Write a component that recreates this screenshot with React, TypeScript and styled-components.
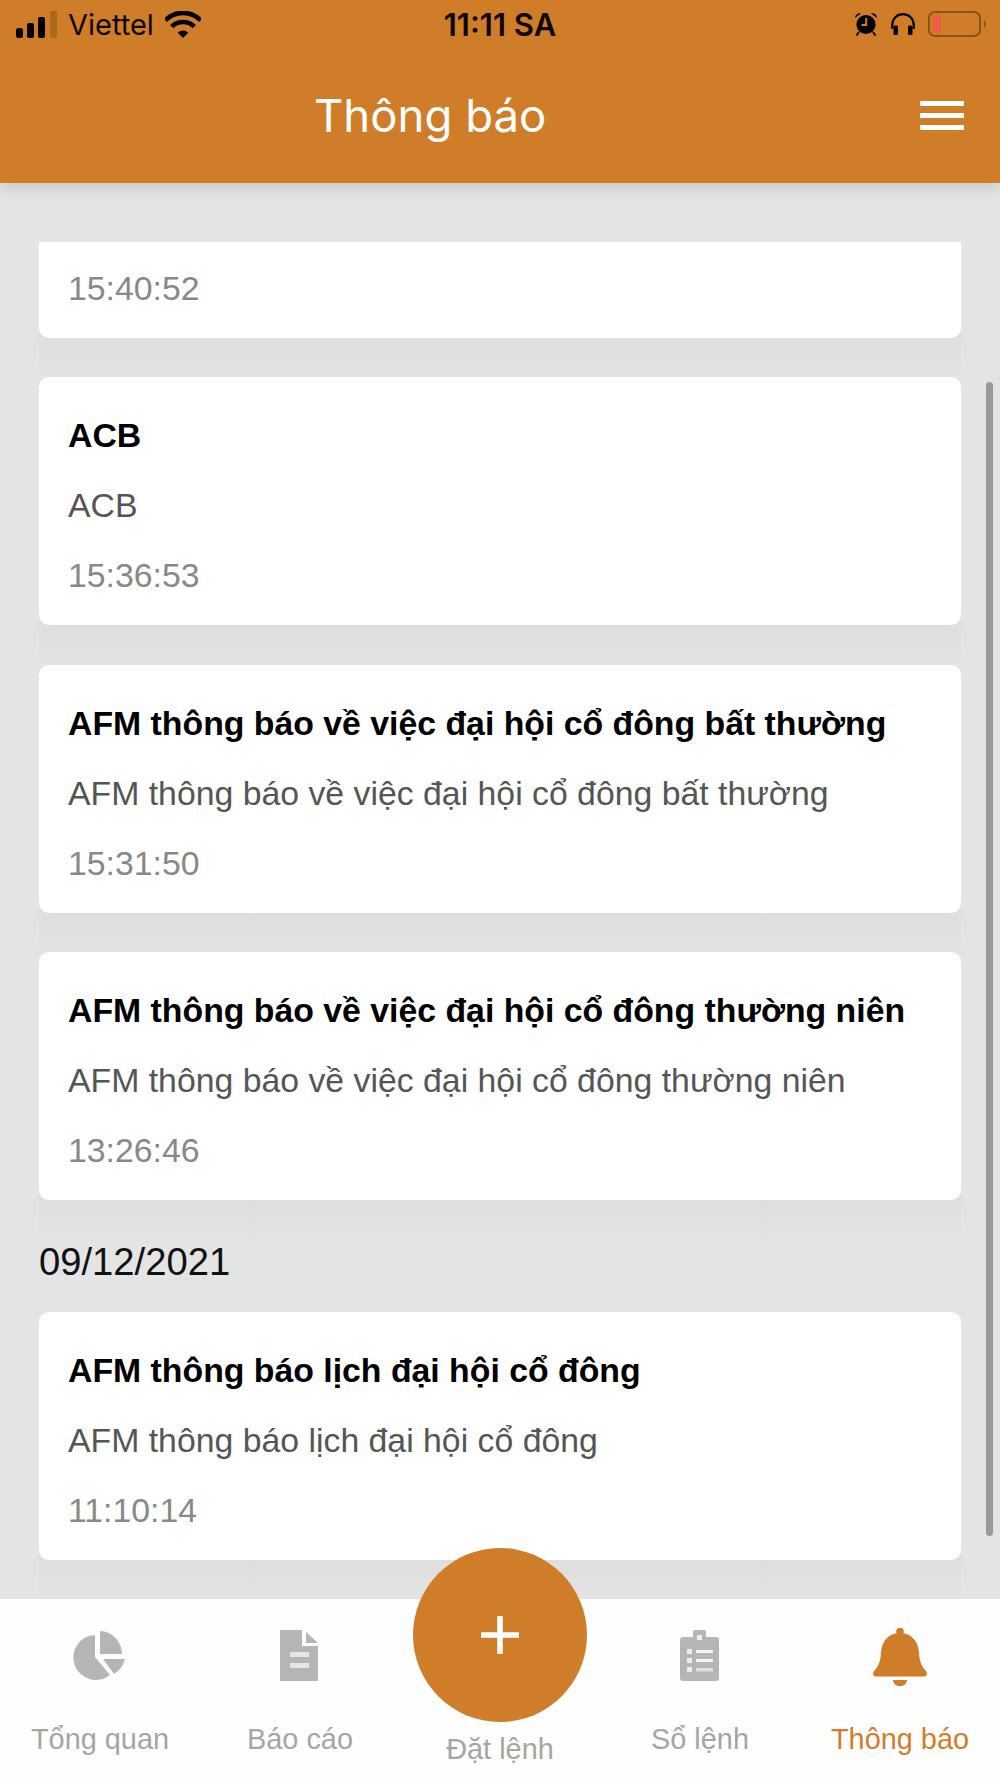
import styled, { createGlobalStyle } from "styled-components"

const ORANGE = "#d07d2a"

type NoticeType = {
  title?: string
  text?: string
  time: string
}

const firstGroup: NoticeType[] = [
  { title: "ACB", text: "ACB", time: "15:36:53" },
  {
    title: "AFM thông báo về việc đại hội cổ đông bất thường",
    text: "AFM thông báo về việc đại hội cổ đông bất thường",
    time: "15:31:50",
  },
  {
    title: "AFM thông báo về việc đại hội cổ đông thường niên",
    text: "AFM thông báo về việc đại hội cổ đông thường niên",
    time: "13:26:46",
  },
]

const SignalIcon = () => (
  <svg width="41" height="27" viewBox="0 0 41 27">
    <rect x="0" y="17" width="7" height="10" rx="2.5" fill="#000" />
    <rect x="11" y="12" width="7" height="15" rx="2" fill="#000" />
    <rect x="22" y="6" width="7" height="21" rx="2" fill="#000" />
    <rect x="34" y="0" width="7" height="27" rx="2" fill="#a9691f" />
  </svg>
)

const WifiIcon = () => (
  <svg width="36" height="27" viewBox="0 0 36 27">
    <path d="M18 27 L12.7 21.7 A7.5 7.5 0 0 1 23.3 21.7 Z" fill="#000" />
    <path d="M6.7 15.7 A16 16 0 0 1 29.3 15.7" fill="none" stroke="#000" strokeWidth="4.6" />
    <path d="M0.3 9.3 A25 25 0 0 1 35.7 9.3" fill="none" stroke="#000" strokeWidth="4.6" />
  </svg>
)

const AlarmIcon = () => (
  <svg width="24" height="24" viewBox="0 0 24 24">
    <circle cx="12" cy="12.5" r="9.6" fill="#000" />
    <path d="M1 6 A4.6 4.6 0 0 1 7 1.5 Z M23 6 A4.6 4.6 0 0 0 17 1.5 Z" fill="#000" />
    <path d="M5 20 L2.5 23.5 M19 20 L21.5 23.5" stroke="#000" strokeWidth="2" />
    <path d="M12.2 6 V13 H7.5" fill="none" stroke={ORANGE} strokeWidth="2" />
  </svg>
)

const HeadphonesIcon = () => (
  <svg width="24" height="22" viewBox="0 0 24 22">
    <path d="M1.3 16 V11.5 A10.7 10.3 0 0 1 22.7 11.5 V16" fill="none" stroke="#000" strokeWidth="2.2" />
    <rect x="2.5" y="12.5" width="4.5" height="9.5" rx="1.6" fill="#000" />
    <rect x="17" y="12.5" width="4.5" height="9.5" rx="1.6" fill="#000" />
  </svg>
)

const BatteryIcon = () => (
  <svg width="60" height="26" viewBox="0 0 60 26">
    <rect x="1" y="1" width="51" height="24" rx="6" fill="none" stroke="#8a5415" strokeWidth="2" />
    <rect x="5" y="4" width="8" height="18" rx="4" fill="#ef5b48" />
    <path d="M56 9 Q60 13 56 17 Z" fill="#8a5415" />
  </svg>
)

const PieIcon = () => (
  <svg width="80" height="80" viewBox="0 0 80 80">
    <path d="M35 20 V42 L50 60 A22.5 22.5 0 1 1 35 20 Z" fill="#b5b5b5" />
    <path d="M40 16 A23 23 0 0 1 62 39 H40 Z" fill="#b5b5b5" />
    <path d="M43 44 H65 A24 24 0 0 1 54 59 Z" fill="#b5b5b5" />
  </svg>
)

const DocIcon = () => (
  <svg width="80" height="80" viewBox="0 0 80 80">
    <path d="M20 15 H42 V31 H58 V66 H20 Z" fill="#b5b5b5" />
    <path d="M46 17 L58 28 H46 Z" fill="#b5b5b5" />
    <rect x="30" y="37" width="19" height="5" fill="#e6e6e6" />
    <rect x="30" y="48" width="19" height="5" fill="#e6e6e6" />
  </svg>
)

const ClipboardIcon = () => (
  <svg width="80" height="80" viewBox="0 0 80 80">
    <rect x="20" y="22" width="39" height="44" rx="3" fill="#b5b5b5" />
    <rect x="33" y="15" width="13" height="12" rx="2" fill="#b5b5b5" />
    <rect x="37" y="20" width="5" height="5" fill="#eee" />
    <rect x="27" y="34" width="5" height="5" fill="#eee" />
    <rect x="27" y="43" width="5" height="5" fill="#eee" />
    <rect x="27" y="52" width="5" height="5" fill="#eee" />
    <rect x="36" y="35" width="17" height="3" fill="#f4f4f4" />
    <rect x="36" y="44" width="17" height="3" fill="#f4f4f4" />
    <rect x="36" y="53" width="17" height="3.5" fill="#e0e0e0" />
  </svg>
)

const BellIcon = () => (
  <svg width="80" height="80" viewBox="0 0 80 80">
    <circle cx="40" cy="16.5" r="3.8" fill={ORANGE} />
    <path
      d="M40 18 C28 18 21.5 27 21 38 C20.5 47 18 52 14.5 55.5 C12 58 13 61.5 16 61.5 H64 C67 61.5 68 58 65.5 55.5 C62 52 59.5 47 59 38 C58.5 27 52 18 40 18 Z"
      fill={ORANGE}
    />
    <path d="M33 65 H47 C46.5 69 44 71 40 71 C36 71 33.5 69 33 65 Z" fill={ORANGE} />
  </svg>
)

const App = () => {
  return (
    <Page>
      <GlobalStyle />
      <Header>
        <StatusBar>
          <StatusGroup>
            <SignalIcon />
            <Carrier>Viettel</Carrier>
            <WifiIcon />
          </StatusGroup>
          <Clock>11:11 SA</Clock>
          <StatusIcons>
            <AlarmIcon />
            <HeadphonesIcon />
            <BatteryIcon />
          </StatusIcons>
        </StatusBar>
        <TitleRow>
          <Title>Thông báo</Title>
          <MenuButton>
            <MenuLine />
            <MenuLine />
            <MenuLine />
          </MenuButton>
        </TitleRow>
      </Header>

      <Content>
        <Card $clipped>
          <CardTime>15:40:52</CardTime>
        </Card>
        {firstGroup.map((item) => (
          <Card key={item.time}>
            <CardTitle>{item.title}</CardTitle>
            <CardText>{item.text}</CardText>
            <CardTime>{item.time}</CardTime>
          </Card>
        ))}
        <DateLabel>09/12/2021</DateLabel>
        <Card>
          <CardTitle>AFM thông báo lịch đại hội cổ đông</CardTitle>
          <CardText>AFM thông báo lịch đại hội cổ đông</CardText>
          <CardTime>11:10:14</CardTime>
        </Card>
        <ScrollThumb />
      </Content>

      <BottomNav>
        <NavItem>
          <NavIcon $soft><PieIcon /></NavIcon>
          <NavLabel>Tổng quan</NavLabel>
        </NavItem>
        <NavItem>
          <NavIcon $soft><DocIcon /></NavIcon>
          <NavLabel>Báo cáo</NavLabel>
        </NavItem>
        <CenterItem>
          <PlusButton>
            <svg width="38" height="38" viewBox="0 0 38 38">
              <path d="M19 0 V38 M0 19 H38" stroke="#fff" strokeWidth="5.5" />
            </svg>
          </PlusButton>
          <NavLabel>Đặt lệnh</NavLabel>
        </CenterItem>
        <NavItem>
          <NavIcon $soft><ClipboardIcon /></NavIcon>
          <NavLabel>Sổ lệnh</NavLabel>
        </NavItem>
        <NavItem>
          <NavIcon><BellIcon /></NavIcon>
          <NavLabel $active>Thông báo</NavLabel>
        </NavItem>
      </BottomNav>
    </Page>
  )
}

export default App

const GlobalStyle = createGlobalStyle`
  html, body {
    margin: 0;
    padding: 0;
    background: #e4e4e4;
  }
`

const Page = styled.div`
  width: 1000px;
  height: 1778px;
  display: flex;
  flex-direction: column;
  overflow: hidden;
  font-family: "Liberation Sans", Arial, sans-serif;
`

const Header = styled.header`
  position: relative;
  z-index: 2;
  height: 183px;
  flex-shrink: 0;
  background-color: ${ORANGE};
  box-shadow: 0 4px 14px rgba(0, 0, 0, 0.14);
`

const StatusBar = styled.div`
  display: grid;
  grid-template-columns: 1fr auto 1fr;
  align-items: center;
  height: 48px;
  padding: 0 12px 0 16px;
`

const StatusGroup = styled.div`
  display: flex;
  align-items: center;
  gap: 11px;
`

const Carrier = styled.span`
  font-family: Inter, sans-serif;
  font-size: 29px;
  color: #0d0700;
`

const Clock = styled.span`
  margin-right: 4px;
  font-family: Inter, sans-serif;
  font-size: 31px;
  font-weight: 600;
  color: #0d0700;
`

const StatusIcons = styled.div`
  display: flex;
  align-items: center;
  justify-content: flex-end;
  gap: 13px;
`

const TitleRow = styled.div`
  display: flex;
  align-items: center;
  justify-content: space-between;
  height: 134px;
  padding: 0 36px 0 314px;
`

const Title = styled.h1`
  margin: 0;
  font-family: Inter, sans-serif;
  font-size: 45.5px;
  font-weight: 400;
  color: #ffffff;
`

const MenuButton = styled.div`
  display: flex;
  flex-direction: column;
  gap: 7px;
  width: 44px;
`

const MenuLine = styled.span`
  display: block;
  height: 5px;
  background-color: #ffffff;
`

const Content = styled.main`
  position: relative;
  z-index: 0;
  flex: 1;
  min-height: 0;
  overflow: hidden;
  display: flex;
  flex-direction: column;
  gap: 39.3px;
  padding: 59px 39px 0;
  background-color: #e4e4e4;
`

const Card = styled.article<{ $clipped?: boolean }>`
  position: relative;
  flex-shrink: 0;
  display: flex;
  flex-direction: column;
  padding: ${(props) => (props.$clipped ? "11px" : "23px")} 29px 15px;
  background-color: #ffffff;
  border-radius: ${(props) => (props.$clipped ? "0 0 10px 10px" : "10px")};

  /* flat shadow band that the design leaves below every card */
  &::after {
    content: "";
    position: absolute;
    z-index: -1;
    top: calc(100% - 10px);
    left: 0;
    right: 0;
    height: 50px;
    background: linear-gradient(#dedede 20%, #e3e3e3);
  }
`

const CardTitle = styled.h2`
  margin: 0;
  font-size: 33.8px;
  font-weight: 700;
  line-height: 70px;
  color: #000000;
`

const CardText = styled.p`
  margin: 0;
  font-size: 33.8px;
  line-height: 70px;
  color: #555555;
`

const CardTime = styled.span`
  font-size: 33.8px;
  line-height: 70px;
  color: #888888;
`

const DateLabel = styled.div`
  flex-shrink: 0;
  height: 33.3px;
  font-size: 38.2px;
  line-height: 46px;
  color: #111111;
`

const ScrollThumb = styled.div`
  position: absolute;
  top: 199px;
  right: 7px;
  width: 7px;
  height: 1154px;
  border-radius: 4px;
  background-color: #999999;
`

const BottomNav = styled.nav`
  position: relative;
  z-index: 3;
  height: 179px;
  flex-shrink: 0;
  display: grid;
  grid-template-columns: repeat(5, 200px);
  background-color: #fefefe;
`

const NavItem = styled.div`
  display: flex;
  flex-direction: column;
  align-items: center;
  padding-top: 16px;
`

const NavIcon = styled.div<{ $soft?: boolean }>`
  height: 80px;
  margin-bottom: 22px;
  filter: ${(props) => (props.$soft ? "blur(0.7px)" : "none")};
`

const CenterItem = styled.div`
  display: flex;
  flex-direction: column;
  align-items: center;
  margin-top: -51px;
`

const PlusButton = styled.div`
  display: flex;
  align-items: center;
  justify-content: center;
  width: 174px;
  height: 174px;
  margin-bottom: 5px;
  border-radius: 50%;
  background-color: ${ORANGE};
`

const NavLabel = styled.span<{ $active?: boolean }>`
  font-size: 28.9px;
  line-height: 44px;
  color: ${(props) => (props.$active ? ORANGE : "#a5a5a5")};
`
